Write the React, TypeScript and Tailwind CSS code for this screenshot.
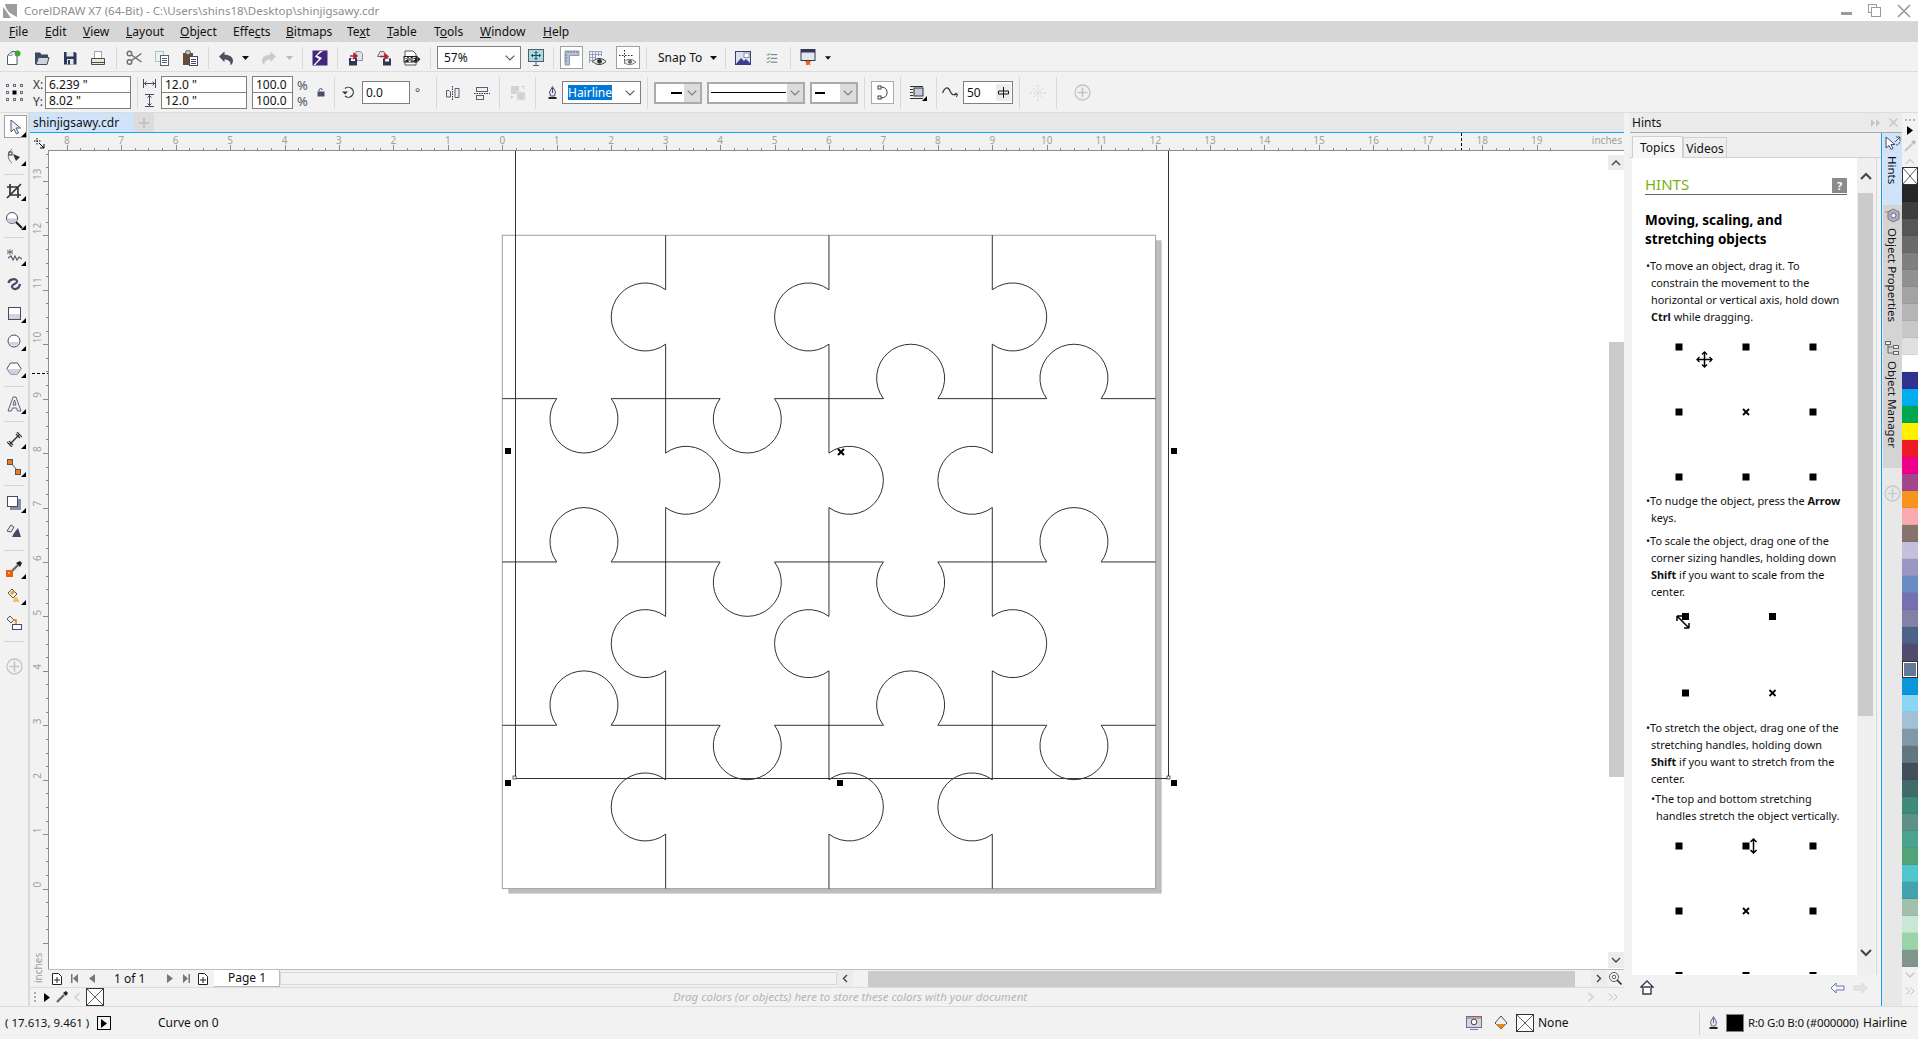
import type { ReactNode } from "react";

const Ico = ({ children, w = 16, h = 16 }: { children: ReactNode; w?: number; h?: number }) => (
  <svg width={w} height={h} viewBox={`0 0 ${w} ${h}`} fill="none" shapeRendering="geometricPrecision">
    {children}
  </svg>
);

const NewDoc = () => (
  <Ico>
    <path d="M1.5 14.5V5.5L6 1.5h5v13z" fill="#fff" stroke="#555a6e" />
    <path d="M1.5 5.5H6V1.5" stroke="#9a9eae" />
    <circle cx="11.5" cy="3.5" r="3" fill="#3da535" />
  </Ico>
);
const OpenFolder = () => (
  <Ico>
    <path d="M1 14V2.5h5l1.5 2H14V7H4.5L2 14z" fill="#3e4763" />
    <path d="M2 14.5 4.5 7.5H15l-2 7z" fill="#cfd3de" stroke="#3e4763" />
  </Ico>
);
const Floppy = () => (
  <Ico>
    <path d="M2 2h11l1.5 1.5V14.5H2z" fill="#2f3759" />
    <rect x="4.5" y="2" width="7" height="4.5" fill="#e6e8f0" />
    <rect x="5" y="9" width="6.5" height="5.5" fill="#e6e8f0" />
    <rect x="6" y="10" width="2" height="4.5" fill="#2f3759" />
  </Ico>
);
const Printer = () => (
  <Ico>
    <rect x="4.5" y="1.5" width="7" height="7" fill="#fff" stroke="#8fb0ae" />
    <path d="M1.5 8.5h13v6h-13z" fill="#ece8c8" stroke="#454a68" />
    <path d="M1.5 12.5h13" stroke="#454a68" />
  </Ico>
);
const Scissors = () => (
  <Ico>
    <circle cx="3.5" cy="3.5" r="2.3" stroke="#6f6f6f" strokeWidth="1.4" />
    <circle cx="3.5" cy="12" r="2.3" stroke="#6f6f6f" strokeWidth="1.4" />
    <path d="M5.5 5 15.5 12M5.5 10.5 15.5 3.5" stroke="#6f6f6f" strokeWidth="1.5" />
  </Ico>
);
const CopyDoc = () => (
  <Ico>
    <rect x="1.5" y="1.5" width="8" height="10" fill="#eef3f1" stroke="#a8c8c0" />
    <rect x="6.5" y="5.5" width="8" height="10" fill="#fff" stroke="#5a5f73" />
    <path d="M8 8.5h5M8 10.5h5M8 12.5h5" stroke="#5a5f73" />
  </Ico>
);
const PasteDoc = () => (
  <Ico>
    <rect x="1" y="3" width="10" height="12" fill="#6b4a32" />
    <rect x="3.5" y="0.5" width="5" height="4" rx="2" fill="#b9c7c3" stroke="#5a5f73" />
    <rect x="7.5" y="6.5" width="8" height="9" fill="#fff" stroke="#454a68" />
    <path d="M9 9.5h5M9 11.5h5M9 13.5h5" stroke="#454a68" />
  </Ico>
);
const Undo = ({ c }: { c: string }) => (
  <Ico>
    <path d="M1 6.5 6.5 1.5v3.2c5 0 8.5 2.3 8.5 6 0 2-1 3.6-2.6 4.8.7-3.5-1.5-6-5.9-6v2.8z" fill={c} />
  </Ico>
);
const Redo = ({ c }: { c: string }) => (
  <Ico>
    <path d="M15 6.5 9.5 1.5v3.2c-5 0-8.5 2.3-8.5 6 0 2 1 3.6 2.6 4.8-.7-3.5 1.5-6 5.9-6v2.8z" fill={c} />
  </Ico>
);
const Connect = () => (
  <Ico>
    <rect x="0.5" y="0.5" width="15" height="15" fill="#44277c" />
    <path d="M11 1 5 5.5l5 2.5-6.5 6.5 1 .5H1.5L7 9 3 6.500 8 1z" fill="#fff" />
  </Ico>
);
const Import = () => (
  <Ico>
    <path d="M8 1.5h4.5l2 2v7H8z" fill="#dfe3ec" stroke="#8c90a3" />
    <rect x="1" y="8" width="8" height="7.5" fill="#2f3759" />
    <rect x="3" y="8.5" width="4" height="2.5" fill="#fff" />
    <path d="M2 6h6M6 3.5 9 6 6 8.5z" stroke="#b3202a" strokeWidth="1.4" fill="#b3202a" />
  </Ico>
);
const Export = () => (
  <Ico>
    <path d="M1.5 6.5 4 1.5h4l1 5z" fill="#dfe3ec" stroke="#6c7084" />
    <rect x="7" y="8.5" width="8" height="7" fill="#2f3759" />
    <rect x="9" y="9" width="4" height="2.5" fill="#fff" />
    <path d="M4 6.5h6M9 4l3 2.5L9 9z" stroke="#b3202a" strokeWidth="1.4" fill="#b3202a" />
  </Ico>
);
const Pdf = () => (
  <svg width="18" height="16" viewBox="0 0 18 16" fill="none">
    <path d="M2 1h8l3 3v11H2z" fill="#fff" stroke="#555" />
    <rect x="0.5" y="6" width="14" height="6.5" fill="#222" />
    <path d="M14.5 6.5 17.5 9.2l-3 2.8z" fill="#222" />
    <path d="M2 7.5v4M2 7.5h2v2H2M6 7.5v4h1.5l.7-2-.7-2zM10 7.5v4M10 7.5h2.5M10 9.5h2" stroke="#fff" strokeWidth="0.9" />
  </svg>
);
const FitPage = () => (
  <svg width="16" height="17" viewBox="0 0 16 17" fill="none">
    <rect x="0.5" y="0.5" width="15" height="12" fill="#a8dcdc" stroke="#555a6e" />
    <path d="M5 16.5h6" stroke="#555a6e" />
    <path d="M8 13v3" stroke="#555a6e" />
    <path d="M8 2.5v8M3.5 6.5h9M6.5 4 8 2.5 9.5 4M6.5 9 8 10.5 9.5 9M5 5 3.5 6.5 5 8M11 5l1.5 1.5L11 8" stroke="#23456c" />
  </svg>
);
const Rulers = () => (
  <Ico>
    <path d="M1 1h14v4.5H5.5V15H1z" fill="#b5c0d2" stroke="#8f9ab0" />
    <path d="M4 1v2M7 1v2M10 1v2M13 1v2M1 5h2M1 8h2M1 11h2" stroke="#6b7590" />
  </Ico>
);
const GridEye = () => (
  <svg width="18" height="16" viewBox="0 0 18 16" fill="none">
    <path d="M.5 1v12M3.5 1v12M6.5 1v12M9.5 1v5M12.5 1v5M0 1.5h13M0 4.5h13M0 7.5h7M0 10.5h5" stroke="#9a9fc0" />
    <path d="M4 11.5c3-4 9-4 13 0-4 4-10 4-13 0z" fill="#e8e8e8" stroke="#333" />
    <circle cx="10.5" cy="11.3" r="2.4" fill="#333" />
  </svg>
);
const GuideEye = () => (
  <svg width="18" height="16" viewBox="0 0 18 16" fill="none">
    <path d="M5.5 0v15M0 5.5h15" stroke="#222" strokeDasharray="1.5 1.5" />
    <path d="M5 12c3-3.5 8-3.5 12 0-4 3.5-9 3.5-12 0z" fill="#eee" stroke="#777" />
    <circle cx="11" cy="11.8" r="2" fill="#666" />
  </svg>
);
const Caret = ({ c = "#111" }: { c?: string }) => (
  <svg width="7" height="4" viewBox="0 0 7 4">
    <path d="M0 0h7L3.5 4z" fill={c} />
  </svg>
);
const Chevron = ({ c = "#555" }: { c?: string }) => (
  <svg width="10" height="6" viewBox="0 0 10 6" fill="none">
    <path d="M.7.7 5 5l4.3-4.3" stroke={c} strokeWidth="1.1" />
  </svg>
);
const OptionsImg = () => (
  <Ico>
    <rect x="0.5" y="1.5" width="15" height="13" fill="#dfe1ee" stroke="#3b3f70" />
    <path d="M1 14 6 8l3 3 2-2 4 4v1.5H1z" fill="#3b3f90" />
    <rect x="9" y="3" width="5" height="4.5" fill="#fff" stroke="#8a8eb0" />
  </Ico>
);
const CheckList = () => (
  <Ico>
    <path d="M1 3 2.5 4.5 5 1.5M1 8l1.5 1.5L5 6.5M1 13l1.5 1.5L5 11.5" stroke="#3f9a3a" strokeWidth="1.3" />
    <path d="M6 3.5h9M6 8.5h9M6 13.5h9" stroke="#5f6478" strokeWidth="1.2" />
  </Ico>
);
const Launch = () => (
  <svg width="16" height="17" viewBox="0 0 16 17" fill="none">
    <rect x="1" y="0.5" width="14" height="11" fill="#e4e6ee" stroke="#333a58" />
    <rect x="1" y="0.5" width="14" height="3" fill="#333a58" />
    <path d="M5 12h6l-1 2 .5 2.5-2-1-2.5 1L6 14z" fill="#f0661e" />
  </svg>
);
const Handles = () => (
  <svg width="17" height="17" viewBox="0 0 17 17" fill="none">
    {[0, 7, 14].flatMap((y) =>
      [0, 7, 14].map((x) =>
        x === 7 && y === 7 ? (
          <rect key={`${x}-${y}`} x={x - 0.5} y={y - 0.5} width="4" height="4" fill="#000" />
        ) : (
          <rect key={`${x}-${y}`} x={x + 0.5} y={y + 0.5} width="2" height="2" stroke="#6a6e80" />
        ),
      ),
    )}
  </svg>
);
const WidthIco = () => (
  <svg width="13" height="9" viewBox="0 0 13 9" fill="none">
    <path d="M.5 0v9M12.5 0v9M1 4.5h11M3.5 2.5l-2 2 2 2M9.5 2.5l2 2-2 2" stroke="#454a68" />
  </svg>
);
const HeightIco = () => (
  <svg width="9" height="13" viewBox="0 0 9 13" fill="none">
    <path d="M0 .5h9M0 12.5h9M4.5 1v11M2.5 3.5l2-2 2 2M2.5 9.5l2 2 2-2" stroke="#454a68" />
  </svg>
);
const Lock = () => (
  <svg width="9" height="9" viewBox="0 0 9 9" fill="none">
    <rect x="0.5" y="3.5" width="7" height="5" fill="#4a4f6a" />
    <path d="M2 3.5V2c0-1.8 3.5-1.8 3.5 0" stroke="#4a4f6a" />
  </svg>
);
const Rotate = () => (
  <svg width="13" height="13" viewBox="0 0 13 13" fill="none">
    <path d="M3 2.5A5 5 0 1 1 3 10" stroke="#333" strokeWidth="1.2" />
    <path d="M0 5.5h6L3 8.5z" fill="#333" />
  </svg>
);
const Mirror = () => (
  <Ico>
    <path d="M7.5 1v14" stroke="#333" strokeDasharray="1.5 1" />
    <path d="M1.5 5.5H4l1.5 1.5v5h-4zM10 3.5h4v9h-4z" fill="#f0f0f0" stroke="#5a5f73" />
  </Ico>
);
const AlignIco = () => (
  <Ico>
    <path d="M0 8.5h16" stroke="#333" strokeDasharray="1.5 1" />
    <rect x="2.5" y="2.5" width="11" height="4" fill="#f0f0f0" stroke="#5a5f73" />
    <rect x="2.5" y="10.5" width="7" height="4" fill="#f0f0f0" stroke="#5a5f73" />
  </Ico>
);
const Combine = () => (
  <svg width="16" height="16" viewBox="0 0 16 16" fill="none">
    <rect x="1" y="1" width="8" height="8" fill="#d2d2d2" />
    <rect x="7" y="7" width="8" height="8" fill="#d2d2d2" stroke="#e4e4e4" />
    <path d="m11 2 3-1v3M2 14l-1-3 3 1" stroke="#cfcfcf" />
  </svg>
);
const PenNib = ({ c = "#454a68" }: { c?: string }) => (
  <svg width="11" height="14" viewBox="0 0 11 14" fill="none">
    <path d="M5.5.5 8.5 6l-1 4h-4l-1-4z" fill="#e6e8f0" stroke={c} />
    <path d="M5.5 2v5" stroke={c} />
    <rect x="1.5" y="11" width="8" height="2" fill="#222" />
  </svg>
);
const CurveIco = () => (
  <svg width="16" height="12" viewBox="0 0 16 12" fill="none">
    <path d="M.5 6c3-7 6-6 7.5-2 1.5 4 4 5 6.5 2" stroke="#333" strokeWidth="1.2" />
    <path d="m12.5 8 3-1-1 3" stroke="#333" />
  </svg>
);
const ShadowBox = () => (
  <svg width="17" height="16" viewBox="0 0 17 16" fill="none">
    <path d="M0 1.5h13M0 4.5h3M0 7.5h3M0 10.5h3M0 13.5h13" stroke="#333" />
    <rect x="4" y="3" width="9" height="8" fill="#c6cadd" stroke="#333" />
    <path d="M17 11v5h-5z" fill="#000" />
  </svg>
);
const PlusCircle = ({ c = "#c4c4c4" }: { c?: string }) => (
  <svg width="17" height="17" viewBox="0 0 17 17" fill="none">
    <circle cx="8.5" cy="8.5" r="7.5" stroke={c} strokeWidth="1.3" />
    <path d="M8.5 3.5v10M3.5 8.5h10" stroke={c} strokeWidth="1.6" />
  </svg>
);
const Corner = () => (
  <span className="absolute right-0 bottom-0">
    <svg width="5" height="5" viewBox="0 0 5 5" className="block">
      <path d="M5 0v5H0z" fill="#000" />
    </svg>
  </span>
);

const VDiv = ({ className }: { className: string }) => <div className={`w-px bg-[#d9d9d9] ${className}`} />;

const Cell = ({ children, className = "w-[28px]" }: { children: ReactNode; className?: string }) => (
  <div className={`h-full shrink-0 flex items-center justify-center ${className}`}>{children}</div>
);

const TitleBar = () => (
  <div className="h-[21px] shrink-0 bg-white flex items-center justify-between">
    <div className="flex items-center text-[11.5px] text-[#8d8d8d] ml-[3px]">
      <svg width="14" height="14" viewBox="0 0 14 14">
        <rect width="14" height="14" fill="#9d9d9d" />
        <path d="M2 0c1 6 5 10 12 13v1H8C5 10 3 6 0 3V0z" fill="#fff" />
      </svg>
      <span className="ml-[7px]">CorelDRAW X7 (64-Bit) - C:\Users\shins18\Desktop\shinjigsawy.cdr</span>
    </div>
    <div className="flex items-center mr-[7px] gap-[16px]">
      <div className="w-[11px] h-[3px] mt-[5px] bg-[#9a9a9a]" />
      <svg width="13" height="13" viewBox="0 0 13 13" fill="none">
        <rect x="0.5" y="0.5" width="8" height="8" stroke="#9a9a9a" />
        <rect x="3.5" y="3.5" width="9" height="9" fill="#fff" stroke="#9a9a9a" />
      </svg>
      <svg width="14" height="14" viewBox="0 0 14 14" fill="none">
        <path d="m1 1 12 12M13 1 1 13" stroke="#9a9a9a" strokeWidth="1.6" />
      </svg>
    </div>
  </div>
);

const menus: { label: ReactNode; w: string }[] = [
  { label: <><u>F</u>ile</>, w: "w-[36px]" },
  { label: <><u>E</u>dit</>, w: "w-[38px]" },
  { label: <><u>V</u>iew</>, w: "w-[43px]" },
  { label: <><u>L</u>ayout</>, w: "w-[54px]" },
  { label: <><u>O</u>bject</>, w: "w-[53px]" },
  { label: <>Effe<u>c</u>ts</>, w: "w-[53px]" },
  { label: <><u>B</u>itmaps</>, w: "w-[61px]" },
  { label: <>Te<u>x</u>t</>, w: "w-[40px]" },
  { label: <><u>T</u>able</>, w: "w-[47px]" },
  { label: <>T<u>o</u>ols</>, w: "w-[46px]" },
  { label: <><u>W</u>indow</>, w: "w-[63px]" },
  { label: <><u>H</u>elp</>, w: "w-[40px]" },
];

const MenuBar = () => (
  <div className="h-[21px] shrink-0 bg-[#d6d6d6] flex items-center pl-[9px] text-[12px] text-[#111]">
    {menus.map((m, i) => (
      <span key={i} className={`${m.w} block`}>
        {m.label}
      </span>
    ))}
  </div>
);

const StandardBar = () => (
  <div className="h-[30px] shrink-0 bg-[#f2f2f2] border-b border-[#dcdcdc] flex items-center pt-[4px] pb-[2px] text-[12px] text-[#111]">
    <Cell><NewDoc /></Cell>
    <Cell><OpenFolder /></Cell>
    <Cell><Floppy /></Cell>
    <Cell><Printer /></Cell>
    <VDiv className="h-[22px] ml-[4px]" />
    <Cell className="w-[28px] ml-[3px]"><Scissors /></Cell>
    <Cell><CopyDoc /></Cell>
    <Cell><PasteDoc /></Cell>
    <VDiv className="h-[22px] ml-[4px]" />
    <Cell className="w-[28px] ml-[3px]"><Undo c="#4a4f62" /></Cell>
    <Cell className="w-[10px]"><Caret /></Cell>
    <Cell className="w-[28px] ml-[5px]"><Redo c="#cbcbcb" /></Cell>
    <Cell className="w-[10px] ml-[1px]"><Caret c="#b8b8b8" /></Cell>
    <VDiv className="h-[22px] ml-[8px]" />
    <Cell className="w-[28px] ml-[3px]"><Connect /></Cell>
    <VDiv className="h-[22px] ml-[3px]" />
    <Cell className="w-[28px] ml-[4px]"><Import /></Cell>
    <Cell><Export /></Cell>
    <Cell><Pdf /></Cell>
    <VDiv className="h-[22px] ml-[4px]" />
    <div className="ml-[6px] w-[84px] h-[23px] bg-white border border-[#808080] flex items-center justify-between pl-[6px] pr-[5px]">
      <span>57%</span>
      <Chevron />
    </div>
    <Cell className="w-[24px] ml-[3px]"><FitPage /></Cell>
    <VDiv className="h-[22px] ml-[5px]" />
    <div className="ml-[6px] w-[23px] h-[23px] bg-white border border-[#a0a0a0] flex items-center justify-center"><Rulers /></div>
    <Cell className="w-[26px] ml-[2px]"><GridEye /></Cell>
    <div className="ml-[5px] w-[24px] h-[23px] bg-white border border-[#a0a0a0] flex items-center justify-center"><GuideEye /></div>
    <VDiv className="h-[22px] ml-[6px]" />
    <span className="ml-[11px] w-[50px]">Snap To</span>
    <Cell className="w-[10px]"><Caret /></Cell>
    <VDiv className="h-[22px] ml-[7px]" />
    <Cell className="w-[34px]"><OptionsImg /></Cell>
    <Cell className="w-[12px] ml-[6px]"><CheckList /></Cell>
    <VDiv className="h-[22px] ml-[12px]" />
    <Cell className="w-[34px]"><Launch /></Cell>
    <Cell className="w-[6px]"><Caret /></Cell>
  </div>
);

const FieldBox = ({ children, className }: { children: ReactNode; className: string }) => (
  <div className={`bg-white border border-[#808080] h-[17px] flex items-center pl-[3px] whitespace-nowrap ${className}`}>{children}</div>
);

const LineBox = ({ children, className }: { children: ReactNode; className: string }) => (
  <div className={`h-[22px] bg-white border-2 border-[#ababab] flex items-stretch ${className}`}>
    <div className="flex-1 flex items-center min-w-0">{children}</div>
    <div className="w-[16px] bg-[#dcdcdc] flex items-center justify-center"><Chevron c="#777" /></div>
  </div>
);

const PropertyBar = () => (
  <div className="h-[41px] shrink-0 bg-[#f2f2f2] border-b border-[#dcdcdc] flex items-center pt-px text-[12px] text-[#111]">
    <Cell className="w-[28px]"><Handles /></Cell>
    <div className="w-[16px] flex flex-col leading-[17px] text-[#333]">
      <span className="pl-[5px]">X:</span>
      <span className="pl-[5px]">Y:</span>
    </div>
    <div className="flex flex-col ml-[1px]">
      <FieldBox className="w-[86px]">6.239 "</FieldBox>
      <FieldBox className="w-[86px] -mt-px">8.02 "</FieldBox>
    </div>
    <VDiv className="h-[32px] ml-[6px]" />
    <div className="w-[23px] flex flex-col items-center gap-[6px]">
      <WidthIco />
      <HeightIco />
    </div>
    <div className="flex flex-col">
      <FieldBox className="w-[86px]">12.0 "</FieldBox>
      <FieldBox className="w-[86px] -mt-px">12.0 "</FieldBox>
    </div>
    <div className="flex flex-col ml-[5px]">
      <FieldBox className="w-[41px]">100.0</FieldBox>
      <FieldBox className="w-[41px] -mt-px">100.0</FieldBox>
    </div>
    <div className="flex flex-col leading-[16px] ml-[4px] w-[14px] text-[#555] text-[13px]">
      <span>%</span>
      <span>%</span>
    </div>
    <Cell className="w-[20px]"><Lock /></Cell>
    <VDiv className="h-[32px] ml-[3px]" />
    <Cell className="w-[27px]"><Rotate /></Cell>
    <div className="w-[48px] h-[23px] bg-white border border-[#808080] flex items-center pl-[3px]">0.0</div>
    <span className="ml-[5px] w-[20px] text-[#555] h-[18px]">°</span>
    <VDiv className="h-[32px] ml-[1px]" />
    <Cell className="w-[32px]"><Mirror /></Cell>
    <Cell className="w-[26px]"><AlignIco /></Cell>
    <VDiv className="h-[32px] ml-[4px]" />
    <Cell className="w-[35px]"><Combine /></Cell>
    <VDiv className="h-[32px]" />
    <Cell className="w-[20px] ml-[6px]"><PenNib /></Cell>
    <div className="w-[79px] h-[23px] bg-white border border-[#808080] flex items-center justify-between pl-[5px] pr-[5px]">
      <span className="bg-[#0078d7] text-white leading-[15px]">Hairline</span>
      <Chevron />
    </div>
    <VDiv className="h-[32px] ml-[6px]" />
    <LineBox className="w-[48px] ml-[6px]">
      <div className="w-[11px] h-[2px] bg-black ml-auto mr-[2px]" />
    </LineBox>
    <LineBox className="w-[98px] ml-[5px]">
      <div className="w-[75px] h-px bg-black ml-[2px]" />
    </LineBox>
    <LineBox className="w-[48px] ml-[5px]">
      <div className="w-[10px] h-[2px] bg-black ml-[3px]" />
    </LineBox>
    <VDiv className="h-[32px] ml-[6px]" />
    <div className="ml-[6px] w-[23px] h-[23px] bg-white border border-[#ababab] flex items-center justify-center">
      <svg width="11" height="15" viewBox="0 0 11 15" fill="none">
        <path d="M3 2c5 0 7 2 7 5.5s-2 5.5-7 5.5" stroke="#333" />
        <rect x="1" y="1" width="3" height="3" fill="#fff" stroke="#444" />
        <rect x="1" y="11" width="3" height="3" fill="#fff" stroke="#444" />
      </svg>
    </div>
    <VDiv className="h-[32px] ml-[6px]" />
    <Cell className="w-[35px]"><ShadowBox /></Cell>
    <VDiv className="h-[32px]" />
    <Cell className="w-[26px]"><CurveIco /></Cell>
    <div className="w-[50px] h-[23px] bg-white border border-[#808080] flex items-center justify-between pl-[3px] pr-[1px]">
      <span>50</span>
      <span className="w-[15px] h-[17px] bg-[#ececec] flex items-center justify-center">
        <svg width="11" height="11" viewBox="0 0 11 11" fill="none">
          <path d="M5.5 0v11M.5 4h10v3H.5z" stroke="#111" />
        </svg>
      </span>
    </div>
    <VDiv className="h-[32px] ml-[6px]" />
    <Cell className="w-[36px]">
      <svg width="16" height="16" viewBox="0 0 16 16" fill="none">
        <path d="M0 8h16M8 0v16M3 3l10 10M13 3 3 13" stroke="#d0d0d0" strokeDasharray="2 1.5" />
      </svg>
    </Cell>
    <VDiv className="h-[32px]" />
    <Cell className="w-[50px]"><PlusCircle /></Cell>
  </div>
);

const Tool = ({ children, className, flag = true }: { children: ReactNode; className: string; flag?: boolean }) => (
  <div className={`w-full flex items-center justify-center ${className}`}>
    <div className="relative w-[24px] h-[20px] flex items-center justify-center">
      {children}
      {flag && <Corner />}
    </div>
  </div>
);
const TDiv = ({ className = "" }: { className?: string }) => <div className={`h-px mx-[4px] bg-[#d4d4d4] ${className}`} />;

const Toolbox = () => (
  <div className="w-[30px] shrink-0 bg-[#f2f2f2] border-r-2 border-[#d9d9d9] pt-[2px]">
    <div className="relative w-[23px] h-[23px] ml-[4px] bg-white border border-[#a0a0a0] flex items-center justify-center">
      <svg width="12" height="16" viewBox="0 0 12 16" fill="none">
        <path d="M1 1v12l3-3 2.5 5 2-1-2.5-5h4.5z" fill="#eceef4" stroke="#4e5370" />
      </svg>
      <Corner />
    </div>
    <Tool className="h-[36px]">
      <svg width="16" height="16" viewBox="0 0 16 16" fill="none">
        <path d="M6 1C1 5 1 11 6 15" stroke="#6c7088" />
        <rect x="3" y="4" width="3" height="3" fill="#fff" stroke="#333" />
        <path d="m7 6 7 3-4 4z" fill="#333" />
      </svg>
    </Tool>
    <TDiv />
    <Tool className="h-[32px]">
      <svg width="16" height="16" viewBox="0 0 16 16" fill="none">
        <path d="M4 1v11h11M1 4h11v11M1 15 15 1" stroke="#333" strokeWidth="1.7" />
      </svg>
    </Tool>
    <Tool className="h-[26px]">
      <svg width="18" height="18" viewBox="0 0 18 18" fill="none">
        <circle cx="7" cy="7" r="5.5" fill="#fff" stroke="#454a68" />
        <path d="M2 7.5h10A5 5 0 0 1 2 7.5z" fill="#c8cbd8" />
        <path d="m11 11 6 6" stroke="#222" strokeWidth="2.2" />
      </svg>
    </Tool>
    <TDiv className="mt-[4px]" />
    <Tool className="h-[36px]">
      <svg width="16" height="14" viewBox="0 0 16 14" fill="none">
        <path d="M4 0v6M1 3h6M1 1l6 4M7 1 1 5" stroke="#555" strokeWidth="0.7" />
        <path d="m2 9 3-2 2 4 2-4 2 4 2-3 3 2" stroke="#555a70" strokeWidth="1.2" />
      </svg>
    </Tool>
    <Tool className="h-[20px]" flag={false}>
      <svg width="15" height="13" viewBox="0 0 15 13" fill="none">
        <path d="M1.5 5C2 1 9 0 10 3 11 6 4 6 5 9s7 3 8-3" stroke="#454a68" strokeWidth="2.2" />
      </svg>
    </Tool>
    <Tool className="h-[38px]">
      <svg width="13" height="13" viewBox="0 0 13 13">
        <rect x="0.5" y="0.5" width="12" height="12" fill="#fff" stroke="#454a68" />
        <rect x="1" y="7" width="11" height="5" fill="#d0d2dd" />
      </svg>
    </Tool>
    <Tool className="h-[18px]">
      <svg width="14" height="14" viewBox="0 0 14 14">
        <circle cx="7" cy="7" r="6" fill="#fff" stroke="#454a68" />
        <path d="M1.5 8h11a6 6 0 0 1-11 0z" fill="#d0d2dd" />
      </svg>
    </Tool>
    <Tool className="h-[36px]">
      <svg width="16" height="13" viewBox="0 0 16 13">
        <path d="M4.5 1h7L15 6.5 11.5 12h-7L1 6.5z" fill="#fff" stroke="#454a68" />
        <path d="M1.5 7h13l-3 5h-7z" fill="#d0d2dd" />
      </svg>
    </Tool>
    <TDiv />
    <Tool className="h-[34px]">
      <svg width="15" height="16" viewBox="0 0 15 16" fill="none">
        <path d="M1 15 6 1h3l5 14h-3.5l-1-3h-4l-1 3zM6 9h3L7.5 4z" fill="#eceef4" stroke="#5f6478" />
      </svg>
    </Tool>
    <TDiv />
    <Tool className="h-[34px]">
      <svg width="15" height="15" viewBox="0 0 15 15" fill="none">
        <path d="m3 12 9-9" stroke="#333" strokeWidth="1.4" />
        <path d="M0 10l5 5M10 0l5 5M2 9l4 4M9 2l4 4" stroke="#333" strokeWidth="1.2" />
      </svg>
    </Tool>
    <Tool className="h-[22px]">
      <svg width="14" height="16" viewBox="0 0 14 16" fill="none">
        <path d="m3 3 8 9" stroke="#555" />
        <rect x="0.5" y="0.5" width="5" height="5" fill="#f07a18" stroke="#555" />
        <rect x="8.5" y="10.5" width="5" height="5" fill="#f07a18" stroke="#555" />
      </svg>
    </Tool>
    <TDiv className="mt-[7px]" />
    <Tool className="h-[34px]">
      <svg width="14" height="14" viewBox="0 0 14 14">
        <rect x="3" y="3" width="11" height="11" fill="#8a8ea4" />
        <rect x="0.5" y="0.5" width="10" height="10" fill="#fff" stroke="#454a68" />
      </svg>
    </Tool>
    <Tool className="h-[22px]" flag={false}>
      <svg width="16" height="15" viewBox="0 0 16 15" fill="none">
        <path d="M5 1 1 7l4 1 3-5z" fill="#e8e8ee" stroke="#555" />
        <path d="m8 9 4-5 3 9H6z" fill="#454a68" />
      </svg>
    </Tool>
    <TDiv className="mt-[8px]" />
    <Tool className="h-[36px]">
      <svg width="16" height="16" viewBox="0 0 16 16" fill="none">
        <path d="m5 11 7-7" stroke="#667" strokeWidth="2.4" />
        <path d="m10 2 4 4 2-4-2-2z" fill="#222" />
        <rect y="9" width="7" height="7" fill="#e85f10" />
        <path d="M2 11h2v2H2z" fill="#f5b070" />
      </svg>
    </Tool>
    <Tool className="h-[16px]">
      <svg width="15" height="15" viewBox="0 0 15 15" fill="none">
        <path d="m1 5 4-4 5 5-4 4z" fill="#f0f0f0" stroke="#555" />
        <path d="M3 5 6 2l2 2-3 3z" fill="#e9a020" />
        <path d="M6 14c0-3 2-5 3-5s3 2 3 5z" fill="#f2bf5e" />
      </svg>
    </Tool>
    <Tool className="h-[38px]" flag={false}>
      <svg width="16" height="15" viewBox="0 0 16 15" fill="none">
        <path d="m1 4 3-3 4 4-3 3z" fill="#f0f0f0" stroke="#555" />
        <path d="M7 5h3v6h3" stroke="#e07010" strokeWidth="1.4" />
        <rect x="6.5" y="9.5" width="9" height="5" fill="#fff" stroke="#454a68" />
      </svg>
    </Tool>
    <TDiv />
    <div className="h-[48px] flex items-center justify-center">
      <PlusCircle />
    </div>
  </div>
);

// ruler numbers are page coordinates: 0in = x 502.3 / y 888.6, 54.44 px per inch
const PX = 54.44;
const X0 = 502.3;
const Y0 = 888.6;

const HRuler = () => {
  const ticks: ReactNode[] = [];
  for (let q = -32; q <= 77; q++) {
    const x = X0 + (q / 4) * PX;
    const major = q % 4 === 0;
    ticks.push(<path key={q} d={`M${Math.round(x) + 0.5} ${major ? 145 : 148}V150`} stroke="#8a8a8a" />);
    if (major)
      ticks.push(
        <text key={`t${q}`} x={x} y={144} fontSize="10" fill="#a0a0a0" textAnchor="middle" fontFamily="'Noto Sans',sans-serif">
          {Math.abs(q / 4)}
        </text>,
      );
  }
  return (
    <svg width="1576" height="18" viewBox="48 133 1576 18" className="block">
      <rect x="48" y="133" width="1576" height="18" fill="#f2f2f2" />
      {ticks}
      <text x="1622" y="144" fontSize="10" fill="#a0a0a0" textAnchor="end" fontFamily="'Noto Sans',sans-serif">inches</text>
      <path d="M1461.5 133V150" stroke="#000" strokeDasharray="3 2" />
      <path d="M48 150.5H1624" stroke="#8e8e8e" />
    </svg>
  );
};

const VRuler = () => {
  const ticks: ReactNode[] = [];
  for (let q = -4; q <= 54; q++) {
    const y = Y0 - (q / 4) * PX;
    const major = q % 4 === 0;
    ticks.push(<path key={q} d={`M${major ? 43 : 46} ${Math.round(y) + 0.5}H48`} stroke="#8a8a8a" />);
    if (major && q >= 0 && q <= 52)
      ticks.push(
        <text
          key={`t${q}`}
          transform={`translate(41 ${y - 1}) rotate(-90)`}
          fontSize="10"
          fill="#a0a0a0"
          fontFamily="'Noto Sans',sans-serif"
        >
          {q / 4}
        </text>,
      );
  }
  return (
    <svg width="18" height="818" viewBox="30 151 18 818" className="block shrink-0 relative z-10 overflow-visible">
      <rect x="30" y="151" width="18" height="818" fill="#f2f2f2" />
      {ticks}
      <rect x="30" y="951" width="18" height="35" fill="#f2f2f2" />
      <text transform="translate(42 983) rotate(-90)" fontSize="10" fill="#a0a0a0" fontFamily="'Noto Sans',sans-serif">inches</text>
      <path d="M32 373.5H48" stroke="#000" strokeDasharray="3 2" />
    </svg>
  );
};

// puzzle, drawn in page coordinates
const L = 502.3;
const T = 235.3;
const S = 163.33;
const HALF = 27.2;
const R = 34;

const hLine = (row: number, dirs: number[]) => {
  const y = T + S * row;
  let d = `M${L} ${y}`;
  dirs.forEach((dir, c) => {
    const cx = L + S * (c + 0.5);
    d += ` L${cx - HALF} ${y} A${R} ${R} 0 1 ${dir < 0 ? 1 : 0} ${cx + HALF} ${y}`;
  });
  return `${d} L${L + S * 4} ${y}`;
};
const vLine = (col: number, dirs: number[]) => {
  const x = L + S * col;
  let d = `M${x} ${T}`;
  dirs.forEach((dir, c) => {
    const cy = T + S * (c + 0.5);
    d += ` L${x} ${cy - HALF} A${R} ${R} 0 1 ${dir > 0 ? 1 : 0} ${x} ${cy + HALF}`;
  });
  return `${d} L${x} ${T + S * 4}`;
};

const Handle = ({ x, y }: { x: number; y: number }) => <rect x={x - 3} y={y - 3} width="6" height="6" fill="#000" />;
const CrossMark = ({ x, y }: { x: number; y: number }) => (
  <path d={`M${x - 3} ${y - 3}l6 6M${x + 3} ${y - 3}l-6 6`} stroke="#000" strokeWidth="2" />
);

const Puzzle = () => (
  <svg width="1559" height="818" viewBox="49 151 1559 818" className="absolute inset-0">
    <rect x={L + 6} y={T + 5} width={S * 4} height={S * 4} fill="#bdbdbd" />
    <rect x={L} y={T} width={S * 4} height={S * 4} fill="#fff" stroke="#a0a0a0" />
    <g stroke="#1a1a1a" fill="none" strokeWidth="0.9">
      <path d={hLine(1, [1, 1, -1, -1])} />
      <path d={hLine(2, [-1, 1, 1, -1])} />
      <path d={hLine(3, [-1, 1, -1, 1])} />
      <path d={vLine(1, [-1, 1, -1, -1])} />
      <path d={vLine(2, [-1, 1, -1, 1])} />
      <path d={vLine(3, [1, -1, 1, -1])} />
    </g>
    <path d="M515.5 150V778.5H1168.5V150" stroke="#333" fill="none" />
    <rect x="513" y="776" width="3" height="3" fill="#fff" stroke="#222" strokeWidth="0.7" />
    <rect x="1167" y="776" width="3" height="3" fill="#fff" stroke="#222" strokeWidth="0.7" />
    <Handle x={508} y={451} />
    <Handle x={1174} y={451} />
    <Handle x={508} y={783} />
    <Handle x={840} y={783} />
    <Handle x={1174} y={783} />
    <CrossMark x={841} y={452} />
  </svg>
);

const PageNav = () => (
  <div className="h-[18px] shrink-0 bg-[#f2f2f2] border-t border-[#bdbdbd] flex items-center text-[12px] text-[#111]">
    <Cell className="w-[18px]"><span /></Cell>
    <Cell className="w-[18px]">
      <svg width="10" height="12" viewBox="0 0 10 12" fill="none">
        <path d="M.5.5h6l3 3v8h-9z" fill="#fff" stroke="#222" />
        <path d="M5 4v6M2 7h6" stroke="#222" />
      </svg>
    </Cell>
    <Cell className="w-[17px]">
      <svg width="7" height="9" viewBox="0 0 7 9"><path d="M0 0h1.5v9H0zM7 0v9L2 4.5z" fill="#777" /></svg>
    </Cell>
    <Cell className="w-[18px]">
      <svg width="6" height="9" viewBox="0 0 6 9"><path d="M6 0v9L0 4.5z" fill="#777" /></svg>
    </Cell>
    <span className="ml-[13px] w-[48px]">1 of 1</span>
    <Cell className="w-[16px]">
      <svg width="6" height="9" viewBox="0 0 6 9"><path d="M0 0v9l6-4.5z" fill="#777" /></svg>
    </Cell>
    <Cell className="w-[17px]">
      <svg width="7" height="9" viewBox="0 0 7 9"><path d="M7 0H5.5v9H7zM0 0v9l5-4.5z" fill="#777" /></svg>
    </Cell>
    <Cell className="w-[16px]">
      <svg width="10" height="12" viewBox="0 0 10 12" fill="none">
        <path d="M.5.5h6l3 3v8h-9z" fill="#fff" stroke="#222" />
        <path d="M5 4v6M2 7h6" stroke="#222" />
      </svg>
    </Cell>
    <div className="ml-[3px] w-[66px] h-full bg-white border-r border-b border-[#bdbdbd] flex items-center pl-[14px]">Page 1</div>
    <div className="flex-1 self-stretch flex items-center">
      <div className="flex-1 h-[13px] border border-[#d8d8d8] bg-[#f2f2f2]" />
      <Cell className="w-[16px] bg-[#ececec]">
        <svg width="6" height="9" viewBox="0 0 6 9" fill="none"><path d="M5 1 1.5 4.5 5 8" stroke="#444" strokeWidth="1.4" /></svg>
      </Cell>
      <div className="w-[15px]" />
      <div className="w-[707px] h-[16px] bg-[#cbcbcb]" />
      <div className="w-[16px]" />
      <Cell className="w-[16px] bg-[#ececec]">
        <svg width="6" height="9" viewBox="0 0 6 9" fill="none"><path d="m1 1 3.5 3.5L1 8" stroke="#444" strokeWidth="1.4" /></svg>
      </Cell>
      <Cell className="w-[17px]">
        <svg width="13" height="13" viewBox="0 0 13 13" fill="none">
          <circle cx="5" cy="5" r="4.5" fill="#fff" stroke="#555" />
          <circle cx="5" cy="5" r="1.8" stroke="#555" />
          <path d="m8 8 4.5 4.5" stroke="#333" strokeWidth="1.6" />
        </svg>
      </Cell>
    </div>
  </div>
);

const XBox = ({ className = "", w = 18 }: { className?: string; w?: number }) => (
  <svg width={w} height="18" viewBox={`0 0 ${w} 18`} fill="none" className={`block shrink-0 ${className}`}>
    <rect x="0.5" y="0.5" width={w - 1} height="17" fill="#fff" stroke="#333" />
    <path d={`m1 1 ${w - 2} 16M${w - 1} 1 1 17`} stroke="#333" strokeWidth="0.8" />
  </svg>
);

const ColorStrip = () => (
  <div className="flex-1 bg-[#f2f2f2] border-t border-[#dcdcdc] flex items-center">
    <div className="w-[3px] h-[10px] ml-[4px] border-l-2 border-dotted border-[#aaa]" />
    <svg width="6" height="9" viewBox="0 0 6 9" className="ml-[7px] shrink-0"><path d="M0 0v9l6-4.5z" fill="#000" /></svg>
    <svg width="13" height="13" viewBox="0 0 13 13" fill="none" className="ml-[5px] shrink-0">
      <path d="m2 11 7-7" stroke="#667" strokeWidth="2.4" />
      <path d="m8 2 3 3 2-3-2-2z" fill="#222" />
    </svg>
    <svg width="8" height="10" viewBox="0 0 8 10" fill="none" className="ml-[5px] shrink-0">
      <path d="M6.5 1 2 5l4.5 4" stroke="#d0d0d0" strokeWidth="1.6" />
    </svg>
    <XBox className="ml-[5px]" />
    <span className="ml-[569px] w-[914px] text-[11.5px] italic text-[#b4b4b4] whitespace-nowrap">Drag colors (or objects) here to store these colors with your document</span>
    <svg width="8" height="10" viewBox="0 0 8 10" fill="none" className="shrink-0">
      <path d="M1.5 1 6 5 1.5 9" stroke="#d0d0d0" strokeWidth="1.6" />
    </svg>
    <svg width="10" height="8" viewBox="0 0 10 8" fill="none" className="ml-[13px] shrink-0">
      <path d="m1 .5 3.5 3.500L1 7.5M5.500.5 9 4 5.500 7.5" stroke="#bdbdbd" />
    </svg>
  </div>
);

const Handles3 = ({ h, y1, y2, y3 }: { h: number; y1: number; y2: number; y3?: number }) => (
  <svg width="220" height={h} viewBox={`0 0 220 ${h}`} className="block">
    {[34, 101, 168].map((x) => (
      <g key={x}>
        <rect x={x - 3.5} y={y1 - 3.5} width="7" height="7" fill="#000" />
        <rect x={x - 3.5} y={y3 ?? 999} width="7" height="7" fill="#000" />
        {x === 101 ? (
          <path d={`M${x - 3} ${y2 - 3}l6 6M${x + 3} ${y2 - 3}l-6 6`} stroke="#000" strokeWidth="1.8" />
        ) : (
          <rect x={x - 3.5} y={y2 - 3.5} width="7" height="7" fill="#000" />
        )}
      </g>
    ))}
  </svg>
);

const HintsBody = () => (
  <div className="w-[225px] bg-white pl-[13px] h-[817px] overflow-hidden text-[10.9px] leading-[17px] text-[#111] relative">
    <div className="h-[37px] w-[202px] border-b border-[#666] flex items-end justify-between">
      <span className="text-[15px] leading-[19px] text-[#79b20e]">HINTS</span>
      <span className="w-[15px] h-[15px] mb-[1px] bg-[#8a8a8a] text-white font-bold text-[11px] leading-[15px] text-center">?</span>
    </div>
    <h2 className="mt-[16px] text-[13.5px] leading-[19px] font-bold text-black whitespace-nowrap">
      Moving, scaling, and
      <br />
      stretching objects
    </h2>
    <p className="mt-[8px] pl-[6px] -indent-[5px] whitespace-nowrap">
      •To move an object, drag it. To
      <br />
      constrain the movement to the
      <br />
      horizontal or vertical axis, hold down
      <br />
      <b>Ctrl</b> while dragging.
    </p>
    <div className="relative h-[167px]">
      <Handles3 h={167} y1={22} y2={87} y3={148.5} />
      <svg width="17" height="17" viewBox="0 0 17 17" fill="none" className="absolute left-[51px] top-[26px]">
        <path d="M8.5 1v15M1 8.5h15" stroke="#000" strokeWidth="1.5" />
        <path d="M6 3.5 8.5 1 11 3.5M6 13.5 8.5 16l2.5-2.500M3.500 6 1 8.5 3.500 11M13.500 6 16 8.5 13.500 11" stroke="#000" strokeWidth="1.3" />
      </svg>
    </div>
    <p className="pl-[6px] -indent-[5px] whitespace-nowrap">
      •To nudge the object, press the <b>Arrow</b>
      <br />
      keys.
    </p>
    <p className="mt-[6px] pl-[6px] -indent-[5px] whitespace-nowrap">
      •To scale the object, drag one of the
      <br />
      corner sizing handles, holding down
      <br />
      <b>Shift</b> if you want to scale from the
      <br />
      center.
    </p>
    <div className="relative h-[119px]">
      <svg width="220" height="119" viewBox="0 0 220 119" className="block">
        <rect x="37" y="13" width="7" height="7" fill="#000" />
        <rect x="124" y="13" width="7" height="7" fill="#000" />
        <rect x="37" y="89.5" width="7" height="7" fill="#000" />
        <path d="M124.5 90l6 6M130.500 90l-6 6" stroke="#000" strokeWidth="1.8" />
        <path d="M32 16l12 12M32 16v5M32 16h5M44 28v-5M44 28h-5" stroke="#000" strokeWidth="1.5" fill="none" />
      </svg>
    </div>
    <p className="pl-[6px] -indent-[5px] whitespace-nowrap">
      •To stretch the object, drag one of the
      <br />
      stretching handles, holding down
      <br />
      <b>Shift</b> if you want to stretch from the
      <br />
      center.
    </p>
    <p className="mt-[3px] pl-[11px] -indent-[5px] whitespace-nowrap">
      •The top and bottom stretching
      <br />
      handles stretch the object vertically.
    </p>
    <div className="relative h-[151px]">
      <Handles3 h={150} y1={22} y2={87} y3={148} />
      <svg width="9" height="16" viewBox="0 0 9 16" fill="none" className="absolute left-[104px] top-[14px]">
        <path d="M4.5 1v14M1.5 4 4.5 1l3 3M1.500 12l3 3 3-3" stroke="#000" strokeWidth="1.5" />
      </svg>
    </div>
  </div>
);

const TabHints = () => (
  <svg width="16" height="15" viewBox="0 0 16 15" fill="none">
    <path d="M1 1v11l3-2.500 2 4 2-1-2-4h4z" fill="#fff" stroke="#454a68" />
    <path d="M11 1h4v4M15 1l-5 5M11 9c2 0 3-1 4-3" stroke="#555" />
  </svg>
);
const TabProps = () => (
  <svg width="16" height="15" viewBox="0 0 16 15" fill="none">
    <path d="M3 4 8 1l6 3v7l-6 3-5-3z" fill="#aab0cc" stroke="#777" />
    <circle cx="8.5" cy="7.5" r="2.5" fill="#eef" stroke="#667" />
    <path d="M0 4h4l1-2" stroke="#c97a30" />
  </svg>
);
const TabManager = () => (
  <svg width="16" height="15" viewBox="0 0 16 15" fill="none">
    <rect x="0.5" y="0.5" width="5" height="3" fill="#eee" stroke="#666" />
    <rect x="8.5" y="4.5" width="5" height="3" fill="#eee" stroke="#666" />
    <rect x="8.5" y="10.5" width="5" height="3" fill="#eee" stroke="#666" />
    <path d="M3 4v8h5M3 6h5" stroke="#666" />
  </svg>
);

const SideTab = ({ className, label, icon }: { className: string; label: string; icon: ReactNode }) => (
  <div className={`flex flex-col items-center pt-[3px] shrink-0 ${className}`}>
    {icon}
    <span className="mt-[5px] [writing-mode:vertical-rl] whitespace-nowrap leading-[19px] text-[11.5px]">{label}</span>
  </div>
);

const Docker = () => (
  <div className="w-[272px] shrink-0 flex flex-col bg-[#f2f2f2]">
    <div className="h-[20px] shrink-0 bg-[#ebebeb] border-b border-[#a9a9a9] flex items-center justify-between pl-[2px] text-[12px] text-[#111]">
      <span>Hints</span>
      <div className="flex items-center gap-[9px] pr-[4px]">
        <svg width="9" height="8" viewBox="0 0 9 8"><path d="M0 0v8l4-4zM5 0v8l4-4z" fill="#c4c4c4" /></svg>
        <svg width="9" height="9" viewBox="0 0 9 9" fill="none"><path d="m.5.5 8 8M8.500.5l-8 8" stroke="#c4c4c4" strokeWidth="1.4" /></svg>
      </div>
    </div>
    <div className="flex-1 flex min-h-0">
      <div className="w-[251px] flex flex-col text-[12px] text-[#111]">
        <div className="h-[25px] shrink-0 bg-[#efefef] flex items-end pl-[2px] border-b border-[#d0d0d0]">
          <div className="w-[51px] h-[22px] -mb-px bg-[#f7f7f7] border border-b-0 border-[#d0d0d0] text-center leading-[21px]">Topics</div>
          <div className="w-[44px] h-[20px] bg-[#efefef] border border-b-0 border-[#d0d0d0] text-center leading-[21px]">Videos</div>
        </div>
        <div className="flex ml-[2px] mr-[4px] border-r border-[#d6d6d6]">
          <HintsBody />
          <div className="w-[17px] bg-[#efefef] flex flex-col items-center">
            <div className="h-[35px] flex items-center">
              <svg width="12" height="8" viewBox="0 0 12 8" fill="none"><path d="m1 7 5-5 5 5" stroke="#444" strokeWidth="2" /></svg>
            </div>
            <div className="w-[15px] h-[523px] bg-[#cbcbcb]" />
            <div className="flex-1 flex items-end pb-[18px]">
              <svg width="12" height="8" viewBox="0 0 12 8" fill="none"><path d="m1 1 5 5 5-5" stroke="#444" strokeWidth="2" /></svg>
            </div>
          </div>
        </div>
        <div className="h-[25px] shrink-0 mx-[2px] mr-[4px] bg-[#f2f2f2] flex items-center justify-between px-[8px]">
          <svg width="14" height="15" viewBox="0 0 14 15" fill="none">
            <path d="M7 1 1 7h2v7h8V7h2zM4 7h6" stroke="#333a58" strokeWidth="1.4" fill="#fff" />
          </svg>
          <div className="flex items-center gap-[8px] pr-[1px]">
            <svg width="15" height="12" viewBox="0 0 15 12" fill="none"><path d="M6 1 1 6l5 5V8h8V4H6z" fill="#f4f6fb" stroke="#6a78a0" /></svg>
            <svg width="15" height="12" viewBox="0 0 15 12" fill="none"><path d="m9 1 5 5-5 5V8H1V4h8z" fill="#e4e4e4" stroke="#d8d8d8" /></svg>
          </div>
        </div>
      </div>
      <div className="w-[21px] shrink-0 border-l border-[#1b9be5] bg-[#e8e8e8] flex flex-col text-[12px] text-[#111] pl-px">
        <SideTab className="h-[72px] bg-[#cfe4fb]" label="Hints" icon={<TabHints />} />
        <SideTab className="h-[133px] bg-[#d4d4d4]" label="Object Properties" icon={<TabProps />} />
        <SideTab className="h-[130px] bg-[#d4d4d4]" label="Object Manager" icon={<TabManager />} />
        <div className="mt-[17px] flex justify-center">
          <PlusCircle c="#c9c9c9" />
        </div>
      </div>
    </div>
  </div>
);

const swatches = [
  "#262626", "#3d3d3d", "#555555", "#6a6a6a", "#7f7f7f", "#919191", "#a3a3a3", "#b6b6b6", "#c8c8c8", "#e0e0e0", "#ffffff",
  "#2e3192", "#00aeef", "#00a651", "#fff200", "#ed1c24", "#ec008c", "#a3478d", "#f7941d", "#f9a9b0", "#85746c",
  "#c4c0dd", "#9a97c6", "#6b8bc4", "#7670b0", "#8480a8", "#4d6288", "#514b70", "#64799a", "#0c95d8", "#8bd5f5",
  "#a2c1d4", "#7f99a8", "#627580", "#424f58", "#416b6b", "#3e8b77", "#5e9088", "#4aa38f", "#53a37a", "#4fc6cc",
  "#42a2ae", "#a2bfae", "#cae7d4", "#98d4aa", "#80968a",
];

const Palette = () => (
  <div className="w-[16px] shrink-0 bg-[#f2f2f2] flex flex-col items-center">
    <div className="h-[9px] mt-[2px] w-[10px] border-t-2 border-dotted border-[#b5b5b5] translate-y-[4px]" />
    <div className="h-[13px] flex items-center">
      <svg width="6" height="9" viewBox="0 0 6 9"><path d="M0 0v9l6-4.5z" fill="#000" /></svg>
    </div>
    <div className="h-[17px] flex items-center">
      <svg width="12" height="12" viewBox="0 0 12 12" fill="none">
        <path d="m1 11 7-7" stroke="#c8c8c8" strokeWidth="2.4" />
        <path d="m7 2 3 3 2-3-2-2z" fill="#bbb" />
      </svg>
    </div>
    <div className="h-[13px] flex items-center">
      <svg width="10" height="6" viewBox="0 0 10 6" fill="none"><path d="M1 5.500 5 1.500l4 4" stroke="#d0d0d0" strokeWidth="1.5" /></svg>
    </div>
    <XBox w={16} />
    <div className="w-full flex flex-col">
      {swatches.map((c, i) => (
        <div
          key={i}
          className={`h-[17px] w-full ${c === "#64799a" ? "border-2 border-white outline outline-[#333] -outline-offset-1" : "border-b border-black/5"}`}
          style={{ backgroundColor: c }}
        />
      ))}
    </div>
    <div className="h-[16px] flex items-center"><Chevron c="#bcbcbc" /></div>
    <div className="h-[16px] flex items-center">
      <svg width="10" height="8" viewBox="0 0 10 8" fill="none">
        <path d="m1 .5 3.500 3.500L1 7.500M5.500.5 9 4 5.500 7.500" stroke="#bdbdbd" />
      </svg>
    </div>
  </div>
);

const StatusBar = () => (
  <div className="h-[33px] shrink-0 bg-[#f2f2f2] border-t border-[#dcdcdc] flex items-center text-[12px] text-[#111] whitespace-nowrap">
    <span className="ml-[5px] w-[92px] text-[11.5px]">( 17.613, 9.461 )</span>
    <div className="w-[14px] h-[14px] border border-black flex items-center justify-center">
      <svg width="6" height="9" viewBox="0 0 6 9"><path d="M0 0v9l6-4.5z" fill="#000" /></svg>
    </div>
    <span className="ml-[47px] w-[1308px]">Curve on 0</span>
    <svg width="16" height="16" viewBox="0 0 16 16" fill="none" className="shrink-0">
      <rect x="0.5" y="1.5" width="15" height="11" fill="#d4d6e4" stroke="#6a6e88" />
      <circle cx="8" cy="7" r="2.8" fill="#fff" stroke="#444" />
      <path d="M1 3h14" stroke="#c9564a" />
      <path d="M4 14.5h8" stroke="#6a7ea8" />
    </svg>
    <svg width="16" height="16" viewBox="0 0 16 16" fill="none" className="ml-[12px] shrink-0">
      <path d="M7 1 1 8l6 6 6-6z" fill="#f0f0f0" stroke="#454a68" />
      <path d="M2 9h10l-5 5z" fill="#e88a1a" />
    </svg>
    <XBox className="ml-[6px]" />
    <span className="ml-[4px] w-[161px]">None</span>
    <div className="w-px h-[24px] bg-[#d4d4d4]" />
    <div className="w-[26px] flex justify-center"><PenNib c="#6a6e88" /></div>
    <div className="w-[18px] h-[18px] bg-black border border-[#808080]" />
    <span className="ml-[4px] w-[115px] text-[11.5px] tracking-[-0.2px]">R:0 G:0 B:0 (#000000)</span>
    <span>Hairline</span>
  </div>
);

export default function App() {
  return (
    <div className="w-[1918px] h-[1039px] flex flex-col overflow-hidden bg-[#f2f2f2] font-['Noto_Sans',sans-serif]">
      <TitleBar />
      <MenuBar />
      <StandardBar />
      <PropertyBar />
      <div className="flex flex-1 min-h-0">
        <Toolbox />
        <div className="w-[1600px] shrink-0 flex flex-col border-r-[6px] border-[#f2f2f2]">
          <div className="h-[20px] shrink-0 bg-[#e8e8e8] border-b border-[#14a5f0] flex text-[12px] text-[#111]">
            <div className="w-[104px] bg-[#cfe4fb] pl-[3px] leading-[19px]">shinjigsawy.cdr</div>
            <div className="w-[20px] bg-[#dcdcdc] flex items-center justify-center">
              <svg width="12" height="12" viewBox="0 0 12 12"><path d="M5 1h2v4h4v2H7v4H5V7H1V5h4z" fill="#c2c2c2" /></svg>
            </div>
          </div>
          <div className="flex h-[18px] shrink-0 w-[1594px]">
            <div className="w-[18px] flex items-end justify-center pb-[2px]">
              <svg width="11" height="11" viewBox="0 0 11 11" fill="none">
                <path d="M0 3h7M3 0v7" stroke="#000" strokeDasharray="1.5 1" />
                <path d="m5 5 5 5M10 6v4H6" stroke="#000" />
              </svg>
            </div>
            <HRuler />
          </div>
          <div className="flex h-[818px] shrink-0 w-[1594px]">
            <VRuler />
            <div className="w-px bg-[#8e8e8e] shrink-0" />
            <div className="relative w-[1559px] h-full bg-white overflow-hidden">
              <Puzzle />
            </div>
            <div className="w-[16px] bg-white flex flex-col items-center">
              <div className="w-[16px] h-[15px] bg-[#ececec] mt-[4px] flex items-center justify-center">
                <svg width="10" height="6" viewBox="0 0 10 6" fill="none"><path d="m1 5 4-4 4 4" stroke="#444" strokeWidth="1.4" /></svg>
              </div>
              <div className="w-[15px] h-[435px] mt-[172px] bg-[#cbcbcb]" />
              <div className="w-[16px] h-[16px] mt-[175px] bg-[#ececec] flex items-center justify-center">
                <svg width="10" height="6" viewBox="0 0 10 6" fill="none"><path d="m1 1 4 4 4-4" stroke="#444" strokeWidth="1.4" /></svg>
              </div>
            </div>
          </div>
          <PageNav />
          <ColorStrip />
        </div>
        <Docker />
        <Palette />
      </div>
      <StatusBar />
    </div>
  );
}
